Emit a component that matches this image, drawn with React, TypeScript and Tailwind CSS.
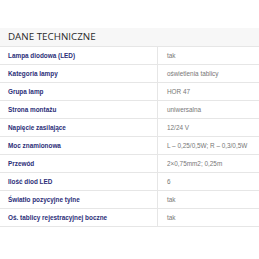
import React from "react";

const rows: [string, string][] = [
  ["Lampa diodowa (LED)", "tak"],
  ["Kategoria lampy", "oświetlenia tablicy"],
  ["Grupa lamp", "HOR 47"],
  ["Strona montażu", "uniwersalna"],
  ["Napięcie zasilające", "12/24 V"],
  ["Moc znamionowa", "L – 0,25/0,5W; R – 0,3/0,5W"],
  ["Przewód", "2×0,75mm2; 0,25m"],
  ["Ilość diod LED", "6"],
  ["Światło pozycyjne tylne", "tak"],
  ["Oś. tablicy rejestracyjnej boczne", "tak"],
];

export default function App() {
  return (
    <div className="w-[259px] h-[259px] bg-white pt-[28px]" style={{ fontFamily: '"Liberation Sans", Arial, sans-serif' }}>
      <div className="h-[19px] bg-[#f7f7f7] border-b border-[#e6e6e6] flex items-center pl-[8px]">
        <span className="text-[9.8px] text-[#2a2a2a]" style={{ fontFamily: '"Open Sans", sans-serif' }}>DANE TECHNICZNE</span>
      </div>
      {rows.map(([k, v]) => (
        <div key={k} className="h-[18px] border-b border-[#e6e6e6] flex items-center">
          <div className="w-[158px] h-full border-r border-[#e6e6e6] flex items-center pl-[8px] text-[6.4px] font-bold text-[#2b2e78]">{k}</div>
          <div className="pl-[9px] text-[6.4px] text-[#777]">{v}</div>
        </div>
      ))}
    </div>
  );
}
